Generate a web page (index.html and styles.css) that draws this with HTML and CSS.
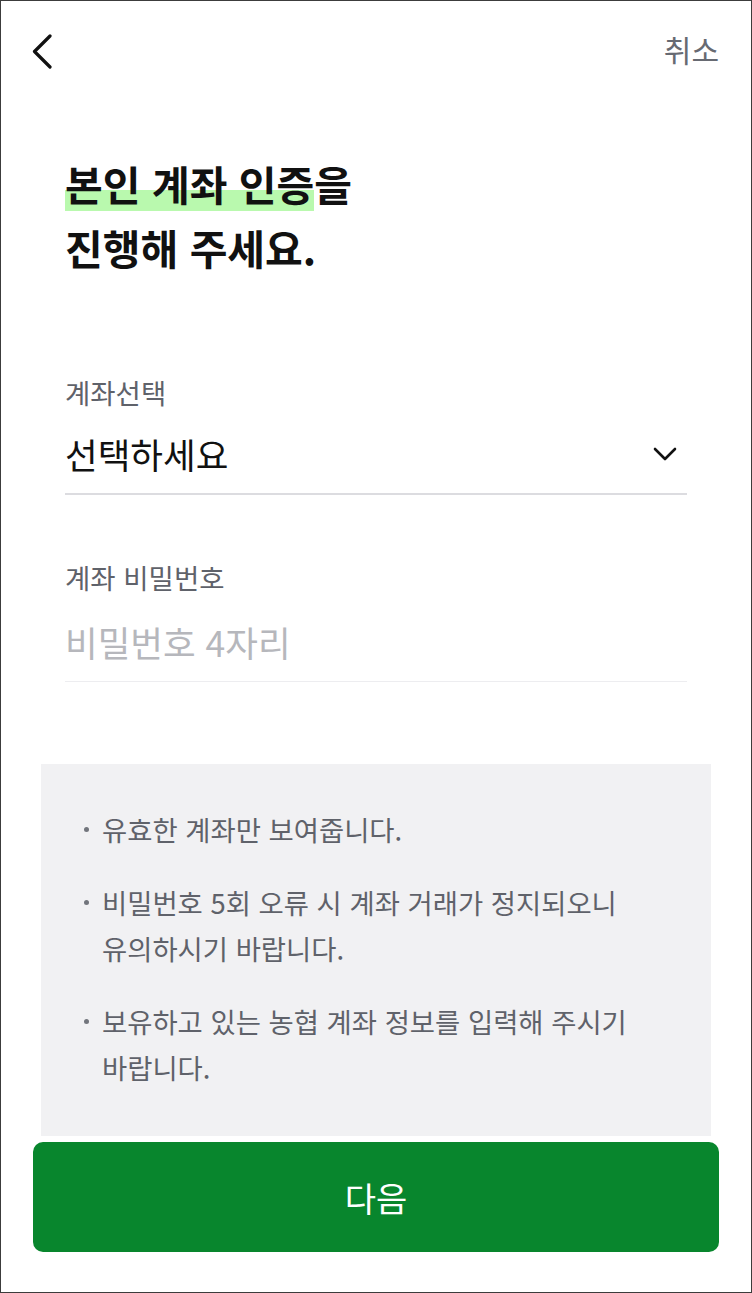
FILE: index.html
```html
<!DOCTYPE html>
<html lang="ko">
<head>
  <meta charset="UTF-8" />
  <title>본인 계좌 인증</title>
  <link rel="stylesheet" href="styles.css">
</head>
<body>

<div class="screen">
  <header class="topbar">
    <button class="back-btn" aria-label="뒤로">
      <svg width="24" height="40" viewBox="0 0 24 40">
        <path d="M18 7 L2.5 22.5 L18 38" fill="none" stroke="#111" stroke-width="3.2" stroke-linecap="round" stroke-linejoin="round"/>
      </svg>
    </button>
    <button class="cancel-btn">취소</button>
  </header>

  <main class="content">
    <h1 class="title">
      <span class="mark">본인 계좌 인증</span>을<br>
      진행해 주세요.
    </h1>

    <div class="field first">
      <label class="field-label">계좌선택</label>
      <div class="field-input select">
        <span class="value">선택하세요</span>
        <svg width="26" height="16" viewBox="0 0 26 16">
          <path d="M3 3 L13 13 L23 3" fill="none" stroke="#111" stroke-width="2.6" stroke-linecap="round" stroke-linejoin="round"/>
        </svg>
      </div>
    </div>

    <div class="field">
      <label class="field-label">계좌 비밀번호</label>
      <div class="field-input pin">
        <span class="placeholder">비밀번호 4자리</span>
      </div>
    </div>
  </main>

  <section class="notice">
    <ul>
      <li>유효한 계좌만 보여줍니다.</li>
      <li>비밀번호 5회 오류 시 계좌 거래가 정지되오니<br>유의하시기 바랍니다.</li>
      <li>보유하고 있는 농협 계좌 정보를 입력해 주시기<br>바랍니다.</li>
    </ul>
  </section>

  <div class="bottom">
    <button class="next-btn">다음</button>
  </div>
</div>

</body>
</html>
```

FILE: styles.css
```css
* {
  box-sizing: border-box;
}

body {
  margin: 0;
  padding: 0;
  background: #fff;
  font-family: 'Noto Sans CJK KR', 'Noto Sans', sans-serif;
  color: #111;
}

.screen {
  width: 752px;
  height: 1293px;
  border: 1px solid #3c3c3c;
  display: flex;
  flex-direction: column;
  background: #fff;
}

.topbar {
  height: 96px;
  display: flex;
  align-items: center;
  justify-content: space-between;
  padding: 0 32px 0 31px;
}

.back-btn,
.cancel-btn {
  border: none;
  background: none;
  padding: 0;
  cursor: pointer;
  font-family: inherit;
}

.back-btn svg {
  display: block;
}

.cancel-btn {
  font-size: 30px;
  line-height: 36px;
  color: #676a72;
}

.content {
  padding: 0 64px;
}

.title {
  margin: 54px 0 0;
  font-size: 41px;
  font-weight: 700;
  line-height: 64px;
  color: #111;
}

.mark {
  background: linear-gradient(to bottom, transparent 61%, #b9f9ae 61%, #b9f9ae 97%, transparent 97%);
}

.field.first {
  margin-top: 95px;
}

.field {
  margin-top: 64px;
}

.field-label {
  display: block;
  font-size: 27.5px;
  line-height: 36px;
  color: #5f626a;
}

.field-input {
  margin-top: 23px;
  display: flex;
  align-items: center;
  justify-content: space-between;
  height: 62px;
  padding-bottom: 18px;
  font-size: 35.5px;
  line-height: 44px;
}

.field-input.select {
  border-bottom: 2px solid #dcdce0;
}

.field-input.select svg {
  margin-right: 9px;
}

.field-input.pin {
  margin-top: 25px;
  border-bottom: 1px solid #ededf0;
}

.placeholder {
  color: #b6b7bc;
}

.notice {
  margin: 82px 40px 0;
  background: #f1f1f3;
  padding: 42px 30px 44px 42px;
  height: 372px;
}

.notice ul {
  list-style: none;
  margin: 0;
  padding: 0;
}

.notice li {
  position: relative;
  padding-left: 19px;
  font-size: 27.4px;
  line-height: 46px;
  color: #5f626a;
  margin-bottom: 27px;
}

.notice li::before {
  content: "";
  position: absolute;
  left: 1px;
  top: 21px;
  width: 5px;
  height: 5px;
  border-radius: 50%;
  background: #72757c;
}

.bottom {
  padding: 6px 32px 0;
}

.next-btn {
  width: 100%;
  height: 110px;
  border: none;
  border-radius: 10px;
  background: #08862d;
  color: #fff;
  font-family: inherit;
  font-size: 34px;
  cursor: pointer;
}
```
